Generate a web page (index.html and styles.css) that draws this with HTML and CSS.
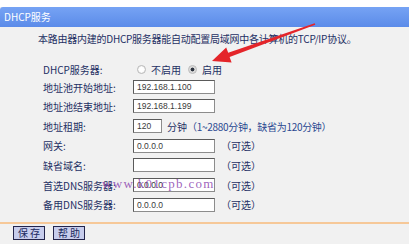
FILE: index.html
```html
<!DOCTYPE html>
<html lang="zh-CN">
<head>
<meta charset="utf-8">
<title>DHCP服务</title>
<link rel="stylesheet" href="styles.css">
</head>
<body>
<div class="page">
  <div class="topgap"></div>
  <div class="header">DHCP服务</div>
  <div class="main">
    <p class="desc">本路由器内建的DHCP服务器能自动配置局域网中各计算机的TCP/IP协议。</p>
    <div class="form">
      <div class="label">DHCP服务器:</div>
      <div class="field">
        <span class="radio"></span><span class="opt">不启用</span>
        <span class="radio on"></span><span class="opt">启用</span>
      </div>

      <div class="label">地址池开始地址:</div>
      <div class="field"><span class="box">192.168.1.100</span></div>

      <div class="label">地址池结束地址:</div>
      <div class="field"><span class="box">192.168.1.199</span></div>

      <div class="label">地址租期:</div>
      <div class="field"><span class="box short">120</span><span class="unit">分钟</span><span class="hint">（1~2880分钟，缺省为120分钟）</span></div>

      <div class="label">网关:</div>
      <div class="field"><span class="box">0.0.0.0</span><span class="opt-note">（可选）</span></div>

      <div class="label">缺省域名:</div>
      <div class="field"><span class="box"></span><span class="opt-note">（可选）</span></div>

      <div class="label">首选DNS服务器:</div>
      <div class="field"><span class="box">0.0.0.0</span><span class="opt-note">（可选）</span></div>

      <div class="label">备用DNS服务器:</div>
      <div class="field"><span class="box">0.0.0.0</span><span class="opt-note">（可选）</span></div>
    </div>
  </div>
  <div class="divider"></div>
  <div class="buttons">
    <span class="btn focus">保 存</span>
    <span class="btn">帮 助</span>
  </div>
  <div class="watermark">www.k01cpb.com</div>
  <svg class="arrow" width="409" height="244" viewBox="0 0 409 244">
    <polygon points="314.7,23.2 228.2,52.8 226.2,47.4 212,61 231.6,62.4 229.6,57 315.3,24.8" fill="#e4252a"/>
  </svg>
</div>
</body>
</html>
```
FILE: styles.css
```css
html, body {
  margin: 0;
  padding: 0;
}
body {
  width: 409px;
  height: 244px;
  overflow: hidden;
  background: #ffffff;
  font-family: "Noto Sans CJK SC", "Liberation Sans", sans-serif;
  font-size: 10px;
  color: #1f3064;
}
.page {
  position: relative;
  width: 409px;
  height: 244px;
  background: #f1f1f1;
}
.topgap {
  height: 7px;
  background: #ffffff;
}
.header {
  height: 20px;
  line-height: 20px;
  padding-left: 4px;
  color: #ffffff;
  font-size: 10px;
  background: linear-gradient(#76a3f4, #5b8be9);
  border-top-left-radius: 3px;
}
.main {
  padding-top: 5px;
}
.desc {
  margin: 0 0 0 38px;
  height: 14px;
  line-height: 14px;
  font-size: 10px;
  letter-spacing: -0.25px;
  white-space: nowrap;
}
.form {
  margin: 14px 0 0 43px;
  display: grid;
  grid-template-columns: 90px 1fr;
  grid-template-rows: 18px 18px 20px 20px 19px 20px 20px 19px;
}
.label {
  display: flex;
  align-items: center;
  white-space: nowrap;
}
.field {
  display: flex;
  align-items: center;
  white-space: nowrap;
}
.radio {
  width: 7px;
  height: 7px;
  border: 1px solid #b9b9b9;
  border-radius: 50%;
  background: radial-gradient(circle, #ffffff 40%, #e4e4e4 100%);
  margin-left: 4px;
  box-sizing: content-box;
}
.radio.on {
  margin-left: 7px;
  background: radial-gradient(circle, #2d3440 32%, #d4d4d4 45%, #eeeeee 100%);
}
.opt {
  margin-left: 5px;
}
.box {
  box-sizing: border-box;
  width: 82px;
  height: 14px;
  background: #ffffff;
  border: 1px solid #8c8c8c;
  border-top-color: #5a5a5a;
  border-left-color: #5a5a5a;
  font-family: "Liberation Sans", sans-serif;
  font-size: 8.5px;
  line-height: 12px;
  color: #3a3a3a;
  padding-left: 3px;
}
.box.short {
  width: 29px;
}
.unit {
  margin-left: 5px;
}
.hint {
  margin-left: 0;
  color: #2a4890;
  letter-spacing: -0.3px;
}
.opt-note {
  margin-left: 6px;
}
.divider {
  margin-top: 8px;
  height: 2px;
  background: #f6c898;
}
.buttons {
  margin-top: 2px;
  display: flex;
  gap: 8px;
  padding-left: 13px;
}
.btn {
  box-sizing: border-box;
  width: 32px;
  height: 14px;
  line-height: 12px;
  text-align: center;
  background: #c7cdec;
  border: 1px solid #23244a;
  color: #1b2a60;
  font-size: 10px;
}
.btn.focus {
  border-width: 1.5px;
  line-height: 11px;
}
.watermark {
  position: absolute;
  left: 102px;
  top: 176px;
  font-family: "Liberation Serif", serif;
  font-size: 13px;
  letter-spacing: 1.3px;
  color: rgba(140, 70, 175, 0.85);
  white-space: nowrap;
}
.arrow {
  position: absolute;
  left: 0;
  top: 0;
  pointer-events: none;
}
```
